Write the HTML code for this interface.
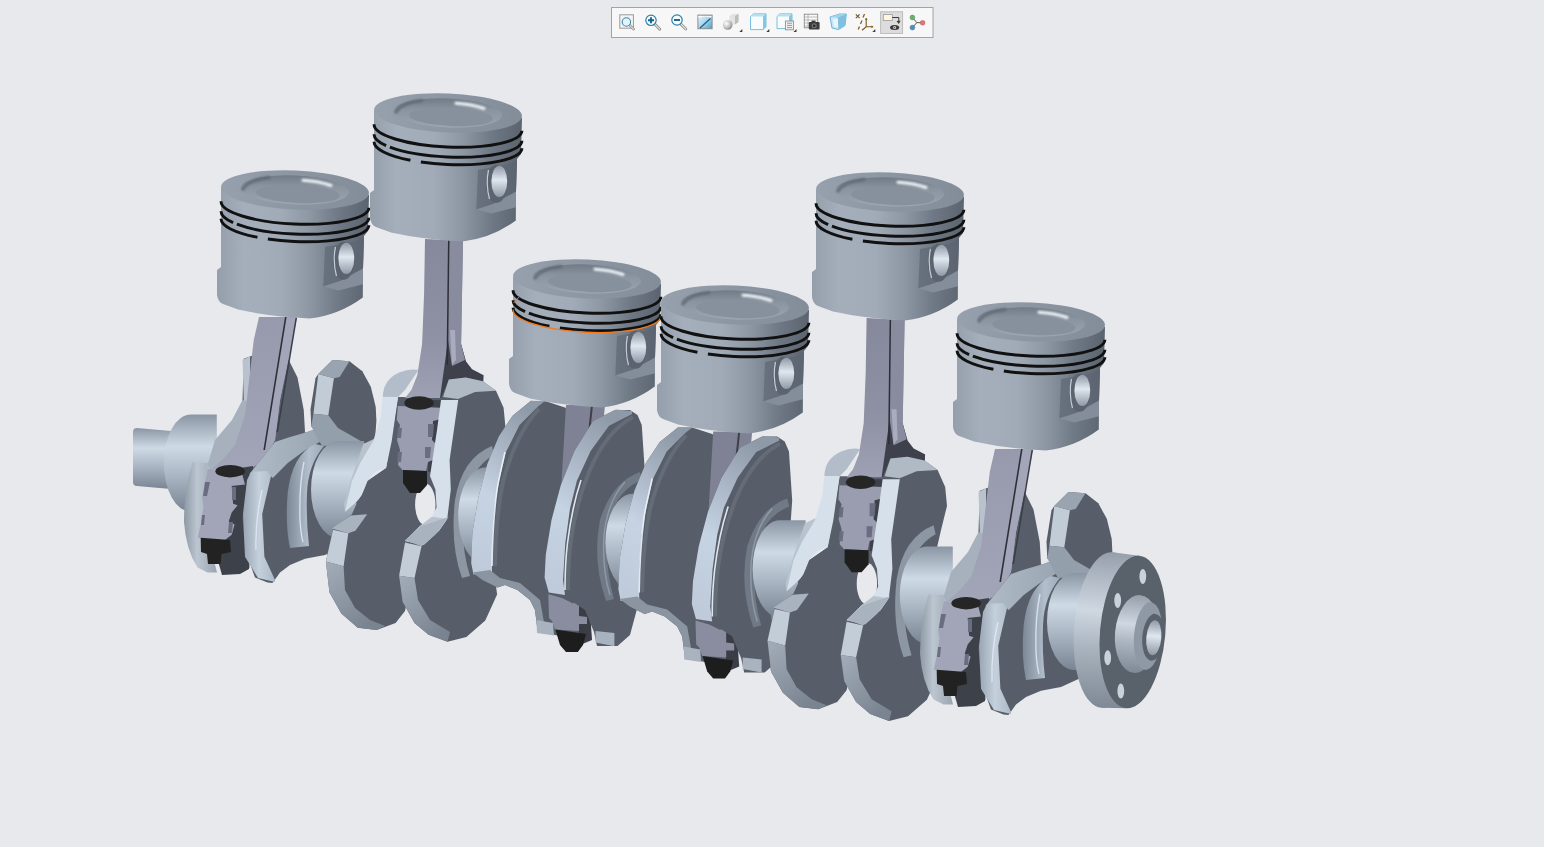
<!DOCTYPE html>
<html><head><meta charset="utf-8">
<style>
html,body{margin:0;padding:0;width:1544px;height:847px;overflow:hidden;background:#e8e9ed;font-family:"Liberation Sans",sans-serif;}
svg{position:absolute;left:0;top:0;}
.tb{position:absolute;left:611px;top:7px;width:321px;height:29px;border:1px solid #a2a2a2;background:#f6f6f6;}
</style></head><body>
<svg width="1544" height="847" viewBox="0 0 1544 847">
<defs>
<linearGradient id="pBody" gradientUnits="userSpaceOnUse" x1="-4" y1="0" x2="148" y2="0">
 <stop offset="0" stop-color="#959fab"/><stop offset="0.18" stop-color="#a5afbb"/>
 <stop offset="0.42" stop-color="#a1abb7"/><stop offset="0.6" stop-color="#8f99a5"/>
 <stop offset="0.8" stop-color="#6f7985"/><stop offset="1" stop-color="#5a636e"/>
</linearGradient>
<linearGradient id="pTop" gradientUnits="userSpaceOnUse" x1="0" y1="0" x2="148" y2="0">
 <stop offset="0" stop-color="#97a1ad"/><stop offset="0.5" stop-color="#8c96a2"/><stop offset="1" stop-color="#838d99"/>
</linearGradient>
<linearGradient id="pBowl2" x1="0" y1="0" x2="0.15" y2="1">
 <stop offset="0" stop-color="#6d7783"/><stop offset="0.45" stop-color="#8a949f"/><stop offset="1" stop-color="#9aa4b0"/>
</linearGradient>
<radialGradient id="pBowl" cx="0.55" cy="0.65" r="0.6">
 <stop offset="0" stop-color="#8c96a2"/><stop offset="0.6" stop-color="#88929e"/><stop offset="1" stop-color="#6f7985"/>
</radialGradient>
<filter id="blur1" x="-20%" y="-50%" width="140%" height="200%"><feGaussianBlur stdDeviation="0.9"/></filter>
<linearGradient id="pRec" x1="0" y1="0" x2="1" y2="0">
 <stop offset="0" stop-color="#68727e"/><stop offset="1" stop-color="#5b6470"/>
</linearGradient>
<linearGradient id="pHole" x1="0" y1="0" x2="0" y2="1">
 <stop offset="0" stop-color="#8f99a5"/><stop offset="0.45" stop-color="#dfe7ef"/><stop offset="1" stop-color="#8f99a5"/>
</linearGradient>
<linearGradient id="cyl" x1="0" y1="0" x2="0" y2="1">
 <stop offset="0" stop-color="#8b96a4"/><stop offset="0.33" stop-color="#cfdae7"/><stop offset="0.65" stop-color="#a8b3c1"/><stop offset="1" stop-color="#7a8593"/>
</linearGradient>
<linearGradient id="rimL" x1="0" y1="0" x2="1" y2="0">
 <stop offset="0" stop-color="#8f99a5"/><stop offset="0.4" stop-color="#bcc6d1"/><stop offset="1" stop-color="#9aa4b0"/>
</linearGradient>
<linearGradient id="tbRep" x1="0" y1="0" x2="1" y2="1">
 <stop offset="0" stop-color="#e9f5fb"/><stop offset="0.5" stop-color="#a9d6ec"/><stop offset="1" stop-color="#4f9fc8"/>
</linearGradient>
<radialGradient id="tbSph" cx="0.35" cy="0.35" r="0.7">
 <stop offset="0" stop-color="#ffffff"/><stop offset="0.6" stop-color="#c4c4c4"/><stop offset="1" stop-color="#8a8a8a"/>
</radialGradient>
<linearGradient id="flRim" x1="0" y1="0" x2="0" y2="1">
 <stop offset="0" stop-color="#959fab"/><stop offset="0.38" stop-color="#cfd8e1"/><stop offset="0.62" stop-color="#aab4bf"/><stop offset="1" stop-color="#7f8995"/>
</linearGradient>
<linearGradient id="lobeRim" x1="0" y1="0" x2="0.6" y2="1">
 <stop offset="0" stop-color="#a3adb9"/><stop offset="0.5" stop-color="#8f99a5"/><stop offset="1" stop-color="#7a8490"/>
</linearGradient>
<linearGradient id="arTop" x1="0" y1="0" x2="1" y2="0">
 <stop offset="0" stop-color="#b0bbc8"/><stop offset="1" stop-color="#939eab"/>
</linearGradient>
<linearGradient id="rimL2" x1="0" y1="0" x2="1" y2="0">
 <stop offset="0" stop-color="#9aa5b3"/><stop offset="0.5" stop-color="#c5d0dd"/><stop offset="1" stop-color="#aeb9c7"/>
</linearGradient>
<linearGradient id="filR" x1="0" y1="0" x2="1" y2="0">
 <stop offset="0" stop-color="#7d8896"/><stop offset="0.6" stop-color="#b3bfcd"/><stop offset="1" stop-color="#9ea9b7"/>
</linearGradient>
<linearGradient id="rodA" x1="0" y1="0" x2="0" y2="1">
 <stop offset="0" stop-color="#9799ad"/><stop offset="1" stop-color="#a2a4b7"/>
</linearGradient>
<linearGradient id="rodB" x1="0" y1="0" x2="0" y2="1">
 <stop offset="0" stop-color="#86889b"/><stop offset="0.6" stop-color="#8e90a3"/><stop offset="1" stop-color="#9ea0b3"/>
</linearGradient>
<linearGradient id="diskRim" x1="0.6" y1="0" x2="0.3" y2="1">
 <stop offset="0" stop-color="#8f9aa8"/><stop offset="0.3" stop-color="#aab6c5"/><stop offset="0.6" stop-color="#c6d3e2"/><stop offset="1" stop-color="#bfcbda"/>
</linearGradient>

<g id="pst">
 <path d="M0,17 L0,96 L-4,99 L-4,124 Q-3,131 2,133 L17,138.6 Q50,146 88.6,147.4 Q118,144 141.8,126.4 L142,98 L143,65 L147,60 L148,24 Z" fill="url(#pBody)"/>
 <ellipse cx="74" cy="19" rx="74" ry="19.5" transform="rotate(2.5 74 19)" fill="url(#pTop)"/>
 <ellipse cx="74" cy="19" rx="54" ry="14.5" transform="rotate(2.5 74 19)" fill="url(#pBowl2)"/>
 <ellipse cx="77" cy="23" rx="42" ry="9" transform="rotate(2.5 77 23)" fill="#87919d"/>
 <path d="M82,9.2 Q98,10.2 110,14.5" fill="none" stroke="#eef4fa" stroke-width="3" stroke-linecap="round" filter="url(#blur1)"/>
 <path d="M22,18 Q27,9 48,6.5" fill="none" stroke="#5d6773" stroke-width="3.5" stroke-linecap="round" opacity="0.8" filter="url(#blur1)"/>
 <path d="M104,76 L133,70.6 L143,66 L142,97.5 L119.7,109.8 L102.3,115.5 Z" fill="url(#pRec)"/>
 <path d="M102.3,115.5 L119.7,109.8 L142,97.5 L142,113.2 L117.4,119.4 Z" fill="#848e9a"/>
 <ellipse cx="122.5" cy="89.7" rx="10.7" ry="19" fill="#5a636e"/>
 <ellipse cx="125.3" cy="87.4" rx="7.9" ry="15.7" fill="url(#pHole)"/>
 <path d="M114.5,76 Q111.5,90 115.5,105" fill="none" stroke="#c5ced8" stroke-width="1.2"/>
 <path d="M0.07,30.27 A74,19.5 2.5 0 0 147.93,36.73" fill="none" stroke="#111" stroke-width="2.9"/>
 <path d="M0.07,40.27 A74,19.5 2.5 0 0 147.93,46.73" fill="none" stroke="#111" stroke-width="2.9" stroke-dasharray="17.4 4.3 300"/>
 <path d="M0.07,47.77 A74,19.5 2.5 0 0 147.93,54.23" fill="none" stroke="#111" stroke-width="2.9" stroke-dasharray="42.8 10.5 300"/>
</g>

<g id="thrA">
 <path d="M243.75,358.75 L262,352 L287.5,357.5 L297.5,377.5 L303.75,410 L305,432 L300,470 L260,478 L238,466 L242.5,400 Z" fill="#575e69"/>
 <path d="M242.5,360 L250,356.25 L250,402 L244,407 Z" fill="#b9c3ce"/>
 <path d="M242.5,400 L250,402 L249,440 L238,466 L215,478 L207.5,465 L215,440 L232,420 Z" fill="#a7b1bd"/>
 <path d="M192.5,462.5 L207.5,463 L210,545 L217,572.5 L207.5,572.5 L197.5,567.5 Q186,550 184,522 Q184,490 192.5,462.5 Z" fill="url(#rimL)"/>
 <path d="M212,540 L249,540 L249,569 L240,574 L222,575 Z" fill="#3d4149"/>
 <path d="M259,317 L297,317 L292.5,340 L280,400 L275,440 L268,455 L262,462 L248,470 L212,469 L225,457 L235,445 L245,415 L253.75,340 Z" fill="url(#rodA)"/>
 <path d="M285.5,317 L297,317 L292.5,340 L280,400 L275,440 L268,452 L265,450 Z" fill="#a3a5b8"/>
 <path d="M285,317 L286.6,317 L265,450 L263.4,450 Z" fill="#2e3038"/>
 <path d="M295.5,318 L297,318 L278,432 L276.5,432 Z" fill="#3a3c46"/>
 <path d="M222,472 L249.4,474 L249.4,568 L222,560 Z" fill="#3d4149"/>
 <path d="M240,468 L253,466 L252,479 L240,479 Z" fill="#3d4149"/>
 <path d="M208,469 L242,473.5 L245,484.5 L231.7,486 L233.1,503.7 L237.6,505.2 L231.7,512.6 L228.7,521.4 L234.6,524.4 L231.7,534.7 L224.3,540.6 L197.7,537.7 L200.7,524.4 L203.6,506.7 L202.1,497.8 Z" fill="#a2a4b8"/>
 <path d="M205,482 L210,482 L207,496 L203,496 Z M202,515 L205,515 L204,525 L201,525 Z M232,487 L236,487 L236,500 L232,500 Z M229,522 L233,522 L232,533 L228,533 Z" fill="#6a6c80"/>
 <ellipse cx="230.2" cy="471.2" rx="14.8" ry="6.2" fill="#262626"/>
 <path d="M200.7,537.7 L230,540 L231,552 L221.5,554 L220.5,564 L208,564 L207,554 L201,552 Z" fill="#222"/>
</g>
<g id="thrAR">
 <path d="M249.5,473.9 L275,442 L287.7,437.7 L309,431.4 L336.6,420.7 L350,428 L360,441 L362,538 L325,555 L305,558.75 L290,565 L280,572.5 L272.5,583 L267.5,582.5 L255,577.5 L245,550 L242.5,517.5 Z" fill="#575e69"/>
 <path d="M249.5,473.9 L275,442 L287.7,437.7 L309,431.4 L336.6,420.7 L345,425 L319.6,442 L304.7,450.5 L287.7,463 L272.9,478 L270.7,476 Z" fill="url(#arTop)"/>
 <path d="M251,472 L267,471 L271,476 L262.2,514 L264.4,556.7 L275,580 L275,582 L258,578 L245,556.7 L243,514 L247,480 Z" fill="url(#rimL2)"/>
 <path d="M262,490 Q255,520 256,550" fill="none" stroke="#e3ecf6" stroke-width="1.3" opacity="0.8"/>
 <path d="M315,444 Q292,455 287.7,493 Q285,525 290,548 L309,546 Q306,520 307,493 Q308,465 324,446 Z" fill="url(#filR)"/>
 <path d="M304,462 Q299,485 300,520 Q301,535 303,542" fill="none" stroke="#d5e0ec" stroke-width="1.4"/>
 <path d="M311.3,426.5 L310.5,409.5 L315.5,378.3 L318.3,374.1 L332.5,359.9 L349.5,361.3 L362.3,371.3 L370.8,386.8 L375.7,406.7 L376.4,420.8 L375,440 L365,446 L330,440 Z" fill="#575e69"/>
 <path d="M318.3,374.1 L333.9,378.3 L328.3,415.2 L313.4,413.8 Z" fill="#c2ccd7"/>
 <path d="M318.3,374.1 L332.5,359.9 L349.5,361.3 L339.6,376.9 L333.9,378.3 Z" fill="#9aa4b0"/>
 <path d="M313.4,413.8 L328.3,415.2 L338,428 L366,444 L322,446 L311.3,426.5 Z" fill="#949fac"/>
</g>

<g id="thrB">
 <path d="M398,397 L441,397 L452,400 L450,520 L431,525 L405,540 L360,515 L356,502 L362,495 L367.6,481 L386,468.2 Z" fill="#575e69"/>
 <path d="M382.8,397 Q383,380 399,372.5 Q410,368 418.5,370 L405,390 L398,397 Z" fill="#b3bdca"/>
 <path d="M363.3,444 L376,438 L360.5,462.5 L352,481 L345,512 L344,504 L352,476.7 Z" fill="#b9c3ce"/>
 <path d="M382.8,396.8 L398,397 L391.7,441.2 L386,468.2 Q372,470 366,485 Q362,497 356,502.2 L345,512 L347.7,499.3 L352,481 L360.5,462.5 L373.2,441.2 L380.7,416.6 Z" fill="#d6e0eb"/>
 <ellipse cx="425.3" cy="504.3" rx="10.2" ry="20.7" fill="#e8e9ed"/>
 <path d="M333,528.5 L351.9,514.3 L356,505 L362,495 L367.6,481 L386,468.2 L405,475 L420,540 L405,611 L395.6,622.9 L376.7,630 L357.8,627.7 L341.3,613.5 L329.4,592.2 L325.9,561.5 Z" fill="#575e69"/>
 <path d="M331.8,528.5 L350.7,515.5 L367.2,514.3 L355.4,530.8 L348.3,533.2 Z" fill="#a9b3bf"/>
 <path d="M333,529.7 L348.3,533.2 L343.6,566.3 L325.9,561.5 Z" fill="#c3cdd8"/>
 <path d="M325.9,561.5 L343.6,566.3 L345,590 L355,608 L370,620 L385,626 L376.7,630 L357.8,627.7 L341.3,613.5 L329.4,592.2 Z" fill="url(#lobeRim)"/>
 <path d="M425,238.9 L463,240.8 L461.1,344 L465.9,361.6 L471.8,369.3 L483.5,375.2 L483,385 L445,398 L405,398 L411.4,390 L417.3,375.2 L422.1,344 L424.1,293.4 Z" fill="url(#rodB)"/>
 <path d="M448,340 L461,344 L466,361.6 L472,369.3 L483.5,375.2 L483,386 L450,398 L440,398 Z" fill="#3e414c"/>
 <path d="M449,240.5 L463,240.8 L461.1,344 L465,360 L452,366 L448,340 Z" fill="#898b9f"/>
 <path d="M450,330 L455,330 L456,360 L452,365 Z" fill="#a9abbe"/>
 <path d="M448,240.5 L449.5,240.5 L448,365 L446.5,365 Z" fill="#2c2e36"/>
 <path d="M430,400 L443,400 L443,470 L428,472 Z" fill="#3d4149"/>
 <path d="M397.8,406 L441.2,407.8 L441.2,419 L433,421 L432,440 L437,445 L433,460 L428,462 L426,471 L402.5,470 L398,465 L400,450 L397,440 L400,425 L396.8,420 Z" fill="#9a9cb0"/>
 <path d="M398,428 L402,428 L401,438 L397,438 Z M398,452 L402,452 L401,462 L397,462 Z M428,424 L434,424 L433,437 L428,437 Z M425,447 L431,447 L430,458 L425,458 Z" fill="#6a6c80"/>
 <ellipse cx="419" cy="403" rx="14.7" ry="6.7" fill="#262626"/>
 <path d="M403,470 L427,471 L427,485 L420,493 L410,493 L403,483 Z" fill="#1f1f1f"/>
</g>
<g id="thrBR">
 <path d="M448.8,379.4 L465.8,377.6 L482.8,381.3 L496,390.8 L503.6,407.8 L505.4,426.7 L499.8,449.3 L495,470 L490,540 L497.1,594.6 L485.3,620.6 L466.4,637.1 L447.5,641.8 L428.6,634.7 L414.5,622.9 L402.6,601.7 L399.1,575.7 L405,540.3 L421.5,526.1 L442.8,519 L448.7,507.2 L450,480 L441,398 Z" fill="#575e69"/>
 <path d="M443,397 L448.8,379.4 L465.8,377.6 L482.8,381.3 L496,390.8 L475,392 L458,399 Z" fill="#b0bac5"/>
 <path d="M441,400 L458.2,400 L449.6,460 L450.8,489.5 L447.2,519 L439,530.8 L423.6,545 L405,541 L420,526 L431.9,516.7 L436.6,507.2 L435.4,489.5 L430,476 L437,430 Z" fill="#d6e0eb"/>
 <path d="M447.2,519 L439,530.8 L423.6,545 L405,541 L420,526 L431.9,516.7 Z" fill="#b9c3ce"/>
 <path d="M405,542.6 L421.5,546.2 L414.5,578 L399.1,575.7 Z" fill="#c3cdd8"/>
 <path d="M405,540.3 L421.5,526.1 L442.8,519 L448.7,516.7 L435,535 L421.5,546.2 Z" fill="#a9b3bf"/>
 <path d="M399.1,575.7 L414.5,578 L418,600 L430,620 L450,632 L447.5,641.8 L428.6,634.7 L414.5,622.9 L402.6,601.7 Z" fill="url(#lobeRim)"/>
 <path d="M492,446 Q462,458 455,500 Q450,545 462,578 L470,576 Q460,545 464,505 Q470,468 494,455 Z" fill="#8d97a3"/>
</g>

<g id="thrC">
 <path d="M532.5,401 L545,401 L565,407.5 L582,422 L590,470 L595,600 L585,640 L555,635 L537.5,630 L535,610 L530,600 L517.5,590 L505,585 L497.5,587.5 L482.5,580 L473.5,574.5 L471.2,563 L472.4,533 L478.1,498.6 L487.3,464 L498.8,436.4 L512.6,415.7 L531,400.8 Z" fill="#575e69"/>
 <path d="M545,401 L531,400.8 L512.6,415.7 L498.8,436.4 L487.3,464 L478.1,498.6 L472.4,533 L471.2,563 L473.5,574.5 L492,572 L492,544.6 L494.2,510 L498.8,482.5 L505.7,452.5 L519.5,425 L538,406.5 Z" fill="url(#diskRim)"/>
 <path d="M539,409 C525,423 511,450 503,482 C498,505 495.5,530 495,566" fill="none" stroke="#6f7986" stroke-width="4" opacity="0.5"/>
 <path d="M505,452 C501,470 498,482 497,490 C495,505 492.5,530 492,566" fill="none" stroke="#edf4fb" stroke-width="1.6" opacity="0.9"/>
 <path d="M472.5,572.5 L482.5,580 L497.5,587.5 L505,585 L517.5,590 L530,600 L535,610 L537.5,630 L545,628 L540,600 L520,583 L500,578 L490,570 Z" fill="#8b95a1"/>
 <path d="M566,405 L605,405 L598,480 L590,597 L555,595 Z" fill="#7f8294"/>
 <path d="M591,405 L593,405 L585,480 L583,480 Z" fill="#3d4048"/>
 <path d="M576,605 L590,610 L592,640 L580,645 Z" fill="#3a3d45"/>
 <path d="M548.3,594.2 L562,598 L573,603.5 L579,598 L579,616 L587,617 L587,624 L579,624 L579,631 L555,629.6 L552,621 L549,618 Z" fill="#8a8c9f"/>
 <path d="M555.4,629.6 L586,634 L583,645 L577.8,652 L566,652 L560,645 Z" fill="#1d1d1d"/>
 <path d="M536.5,620 L553,623 L554,635.5 L537,633 Z" fill="#a9b3bf"/>
 <path d="M615,410 L630,410 L637.5,415 L641.75,425 L645,474 L641,531 L637.6,606.7 L630,635 L617.5,646 L597,646 L594,632 L585,610 L570,600 L548.75,592.5 L544.6,577.6 L545.8,554.6 L551.5,520 L560.7,485.5 L574.5,451 L593,421 L616,409.6 Z" fill="#575e69"/>
 <path d="M595.5,631 L614.4,633 L614.4,646.2 L595.5,642.6 Z" fill="#a9b3bf"/>
 <path d="M617,560 L638,562 L637,600 L625,596 Z" fill="#7a8490"/>
 <path d="M632,411 L616,409.6 L593,421 L574.5,451 L560.7,485.5 L551.5,520 L545.8,554.6 L544.6,577.6 L548.75,592.5 L565,595 L563,580 L565.3,543 L570,508.6 L576.8,481 L590.6,451 L609,425.7 L632,414 Z" fill="url(#diskRim)"/>
 <path d="M633,417 C614,427 599,448 589,472 C580,494 574,517 570.5,543 C568.5,560 568,575 568,590" fill="none" stroke="#6f7986" stroke-width="4" opacity="0.5"/>
 <path d="M581,480 C577,492 571,515 567.5,543 C565.5,560 565,575 565,590" fill="none" stroke="#edf4fb" stroke-width="1.6" opacity="0.9"/>
 <path d="M640,472 Q612,482 600,520 Q592,560 606,601 L614,599 Q604,565 608,525 Q616,490 642,480 Z" fill="#707a86"/>
 <path d="M625,482 Q608,500 604,535 Q602,570 610,595" fill="none" stroke="#8f99a5" stroke-width="1.5"/>
</g>

<g id="jrn">
 <path d="M338,441 L364,441 L364,538 L338,538 A27,48.5 0 0 1 338,441 Z" fill="url(#cyl)"/>
</g>
</defs>
<path d="M133,432 Q133,428 137,428 L171,431 L171,489 L137,486 Q133,486 133,482 Z" fill="url(#cyl)"/><use href="#jrn" transform="translate(-147.2,-26.4)"/><use href="#thrA"/><use href="#pst" transform="translate(221,171)"/><use href="#thrAR"/><use href="#jrn" transform="translate(0.0,0.0)"/><use href="#thrB"/><use href="#pst" transform="translate(374,94)"/><use href="#thrBR"/><use href="#jrn" transform="translate(147.2,26.4)"/><use href="#thrC"/><use href="#pst" transform="translate(513,260)"/><path d="M512.3,309.5 A74,19.5 2.5 0 0 660.2,316" transform="translate(0.8,0)" fill="none" stroke="#f27a1c" stroke-width="1.3"/><path d="M513.5,303 L520,296" fill="none" stroke="#f27a1c" stroke-width="1"/><use href="#jrn" transform="translate(294.4,52.8)"/><use href="#thrC" transform="translate(147.2,26.4)"/><use href="#pst" transform="translate(661,286)"/><use href="#jrn" transform="translate(441.6,79.2)"/><use href="#thrB" transform="translate(441.6,79.2)"/><use href="#pst" transform="translate(816,173)"/><use href="#thrBR" transform="translate(441.6,79.2)"/><use href="#jrn" transform="translate(588.8,105.6)"/><use href="#thrA" transform="translate(736.0,132.0)"/><use href="#pst" transform="translate(957,303)"/><use href="#thrAR" transform="translate(736.0,132.0)"/><use href="#jrn" transform="translate(736.0,132.0)"/>
<g>
 <ellipse cx="1107" cy="630" rx="33" ry="78" transform="rotate(4 1107 630)" fill="url(#flRim)"/>
 <path d="M1112.4,552.2 L1139.4,555.8 L1126,708.2 L1101.6,707.8 Z" fill="url(#flRim)"/>
 <ellipse cx="1132.7" cy="632" rx="32.7" ry="76.5" transform="rotate(5 1132.7 632)" fill="#59616b"/>
 <ellipse cx="1142.8" cy="576.5" rx="3.4" ry="7.5" fill="#c9d2dc"/>
 <ellipse cx="1117.7" cy="600.5" rx="3.4" ry="7.5" fill="#c9d2dc"/>
 <ellipse cx="1107.7" cy="657.8" rx="3.4" ry="7.5" fill="#c9d2dc"/>
 <ellipse cx="1120.8" cy="691" rx="3.4" ry="7.5" fill="#c9d2dc"/>
 <ellipse cx="1137" cy="634" rx="22" ry="39" transform="rotate(5 1137 634)" fill="url(#flRim)"/>
 <ellipse cx="1148" cy="636" rx="14" ry="34" transform="rotate(5 1148 636)" fill="#8f99a5"/>
 <ellipse cx="1153.3" cy="637.3" rx="11" ry="23.5" transform="rotate(5 1153.3 637.3)" fill="#59616b"/>
 <ellipse cx="1153.8" cy="637.8" rx="7.5" ry="17.5" transform="rotate(5 1153.8 637.8)" fill="url(#pHole)"/>
</g>

<g id="toolbar">
 <rect x="611.5" y="7.5" width="321.5" height="30" fill="#f7f7f7" stroke="#a3a3a3" stroke-width="1"/>
 <!-- 1 zoom fit -->
 <rect x="619.8" y="14.8" width="13.6" height="13.4" fill="#f4f4f4" stroke="#9a9a9a" stroke-width="1"/>
 <line x1="629.6" y1="25.2" x2="633.6" y2="29.2" stroke="#8a8a8a" stroke-width="2.6" stroke-linecap="round"/>
 <line x1="629.6" y1="25.2" x2="633.6" y2="29.2" stroke="#e4e4e4" stroke-width="1.1" stroke-linecap="round"/>
 <circle cx="626.4" cy="22" r="4.2" fill="#e4f3fa" stroke="#3b88ad" stroke-width="1.1"/>
 <!-- 2 zoom in -->
 <line x1="655.2" y1="24.6" x2="659.8" y2="29.2" stroke="#8a8a8a" stroke-width="2.8" stroke-linecap="round"/>
 <line x1="655.2" y1="24.6" x2="659.8" y2="29.2" stroke="#e8e8e8" stroke-width="1.2" stroke-linecap="round"/>
 <circle cx="651" cy="20.3" r="5.2" fill="#f4fafd" stroke="#2d7fa8" stroke-width="1.2"/>
 <path d="M651,17.3 V23.3 M648,20.3 H654" stroke="#17608c" stroke-width="1.9"/>
 <!-- 3 zoom out -->
 <line x1="681.2" y1="24.4" x2="685.8" y2="29" stroke="#8a8a8a" stroke-width="2.8" stroke-linecap="round"/>
 <line x1="681.2" y1="24.4" x2="685.8" y2="29" stroke="#e8e8e8" stroke-width="1.2" stroke-linecap="round"/>
 <circle cx="677" cy="20" r="5.2" fill="#f4fafd" stroke="#2d7fa8" stroke-width="1.2"/>
 <path d="M674,20 H680" stroke="#17608c" stroke-width="1.9"/>
 <!-- 4 repaint -->
 <rect x="697.9" y="15.1" width="14.2" height="13.6" fill="url(#tbRep)" stroke="#8c8c8c" stroke-width="1"/>
 <path d="M698.5,18 Q704,15.5 711.5,17.5 L711.5,16 L698.5,16 Z" fill="#ffffff"/>
 <line x1="700" y1="28" x2="710.5" y2="18.5" stroke="#1d5f8a" stroke-width="1.2"/>
 <!-- 5 display style -->
 <path d="M729.5,16 L733,13.8 L738.5,13.8 L738.5,22 L735,24.5 L729.5,24.5 Z" fill="#e3e3e3"/>
 <path d="M735,16 L738.5,13.8 L738.5,22 L735,24.5 Z" fill="#bdbdbd"/>
 <circle cx="727.7" cy="25" r="4.8" fill="url(#tbSph)"/>
 <path d="M739.3,32 L742.3,32 L742.3,29 Z" fill="#3a3a3a"/>
 <!-- 6 saved views -->
 <path d="M750.5,16.5 L753.5,13.8 L766,13.8 L766,26.8 L763,29.6 L750.5,29.6 Z" fill="#f8fcfe" stroke="#6bb8dd" stroke-width="0.9"/>
 <path d="M750.5,16.5 L753.5,13.8 L766,13.8 L763,16.5 Z" fill="#b6dff0"/>
 <path d="M763,16.5 L766,13.8 L766,26.8 L763,29.6 Z" fill="#86c6e4"/>
 <path d="M766.3,32 L769.3,32 L769.3,29 Z" fill="#3a3a3a"/>
 <!-- 7 view manager -->
 <path d="M777,16.5 L780,13.8 L792,13.8 L792,26 L789,28.6 L777,28.6 Z" fill="#f8fcfe" stroke="#6bb8dd" stroke-width="0.9"/>
 <path d="M777,16.5 L780,13.8 L792,13.8 L789,16.5 Z" fill="#b6dff0"/>
 <path d="M789,16.5 L792,13.8 L792,26 L789,28.6 Z" fill="#86c6e4"/>
 <rect x="785.4" y="21" width="8" height="8.8" fill="#f2f2f2" stroke="#8e8e8e" stroke-width="0.9"/>
 <path d="M787,23.2 H792 M787,25.4 H792 M787,27.6 H792" stroke="#707070" stroke-width="0.7"/>
 <path d="M793.5,32 L796.5,32 L796.5,29 Z" fill="#3a3a3a"/>
 <!-- 8 table camera -->
 <rect x="804.3" y="14.2" width="13.4" height="13.6" fill="#fafafa" stroke="#8a8a8a" stroke-width="0.9"/>
 <path d="M804.3,17 H817.7 M804.3,20 H817.7 M804.3,23 H817.7 M804.3,26 H817.7 M808,14.2 V27.8" stroke="#a0a0a0" stroke-width="0.7"/>
 <rect x="808.8" y="22" width="10.8" height="7.6" rx="1" fill="#3c3c3c"/>
 <rect x="811.5" y="20.6" width="4" height="2" fill="#3c3c3c"/>
 <circle cx="814.2" cy="25.8" r="2.5" fill="#777"/>
 <circle cx="814.2" cy="25.8" r="1.4" fill="#2a2a2a"/>
 <!-- 9 perspective box -->
 <path d="M830,17 L839.5,14 L846.3,14 L845,25.5 L838.5,29.6 L832,28 Z" fill="#c9e6f3" stroke="#5eaed6" stroke-width="0.9"/>
 <path d="M830,17 L839.5,14 L846.3,14 L837.5,17.5 Z" fill="#9fd3ea"/>
 <path d="M837.5,17.5 L846.3,14 L845,25.5 L838.5,29.6 Z" fill="#7fc0e0"/>
 <path d="M833,19 L838,18.6 L838,27.5 L834,26.5 Z" fill="#e8f5fb"/>
 <!-- 10 datum display -->
 <path d="M855.8,14.3 L859.6,18.1 M859.6,14.3 L855.8,18.1" stroke="#7b5a1e" stroke-width="1.2"/>
 <path d="M864.5,14 L863,17.5 M862,20.5 L860.5,24 M859.5,26.5 L858.2,29.6" stroke="#8a6520" stroke-width="1.3"/>
 <path d="M866.2,26.8 L866.2,18.5 M866.2,26.8 L872.5,26.8 M866.2,26.8 L862,30.2" stroke="#7b5a1e" stroke-width="1.1"/>
 <path d="M864.8,19.8 L866.2,17.8 L867.6,19.8 Z M871.5,25.4 L873.6,26.8 L871.5,28.2 Z" fill="#7b5a1e"/>
 <path d="M872.3,32 L875.3,32 L875.3,29 Z" fill="#3a3a3a"/>
 <!-- 11 annotation display (pressed) -->
 <rect x="880.6" y="11.8" width="22" height="21.6" fill="#dcdcdc" stroke="#b8b8b8" stroke-width="0.9"/>
 <rect x="883.3" y="14.6" width="9" height="5.8" fill="#fdf7df" stroke="#9a9a9a" stroke-width="0.8"/>
 <path d="M892.3,17.5 H898.8 V22.5" stroke="#3a3a3a" stroke-width="1" fill="none"/>
 <path d="M896.5,21 L898.8,24 L900.6,20.8 Z" fill="#3a3a3a"/>
 <ellipse cx="894.6" cy="27.6" rx="4.6" ry="2.5" fill="#3a3a3a"/>
 <circle cx="894.6" cy="27.6" r="1.5" fill="#dcdcdc"/>
 <circle cx="894.6" cy="27.6" r="0.7" fill="#3a3a3a"/>
 <!-- 12 spin center -->
 <path d="M912.4,17.5 L916.8,22.6 L922.6,22.8 M916.8,22.6 L912.4,27.6" stroke="#444" stroke-width="0.9" fill="none"/>
 <circle cx="912.4" cy="17.5" r="2.4" fill="#6cae6c" stroke="#4d8a4d" stroke-width="0.5"/>
 <circle cx="922.6" cy="22.8" r="2.4" fill="#e47474" stroke="#b85050" stroke-width="0.5"/>
 <circle cx="912.4" cy="27.6" r="2.4" fill="#4f8fc0" stroke="#3a6f98" stroke-width="0.5"/>
</g>

</svg>

</body></html>
